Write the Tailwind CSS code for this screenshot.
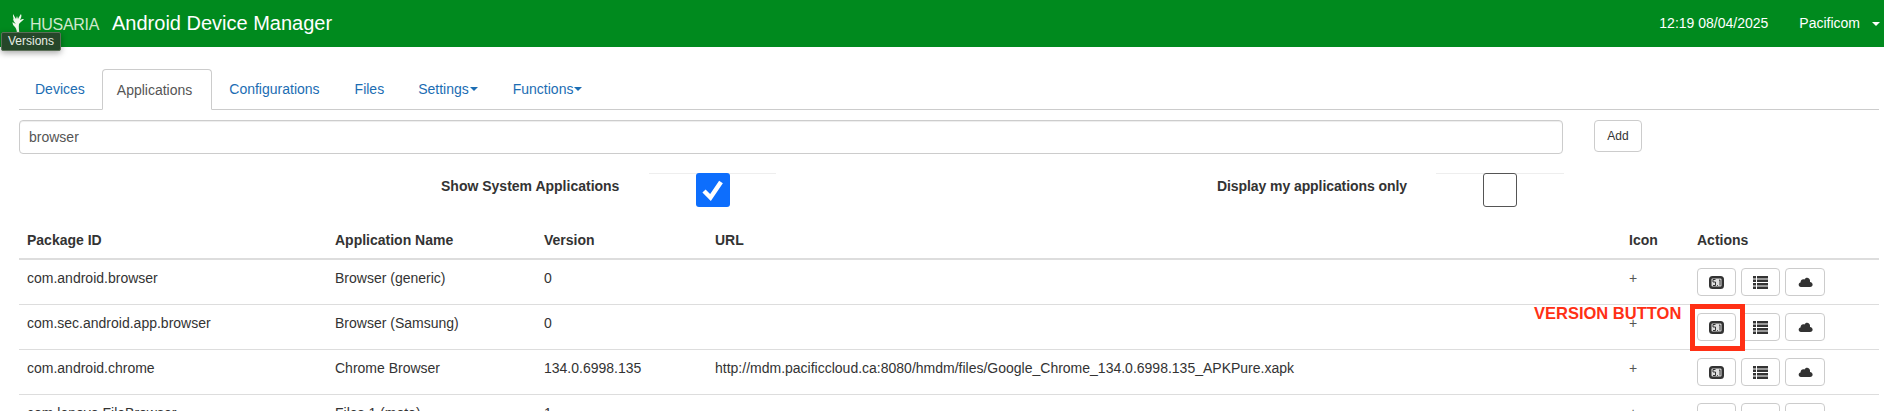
<!DOCTYPE html>
<html><head><meta charset="utf-8"><script src="https://cdn.jsdelivr.net/npm/@tailwindcss/browser@4"></script></head>
<body class="relative h-[411px] overflow-hidden bg-white font-['Liberation_Sans',Arial,sans-serif] text-[14px] leading-[20px] text-[#333]">
<header class="flex h-[47px] items-center bg-[#008a1e] text-white">
  <div class="ml-[12px] flex items-center">
    <svg width="12" height="20" viewBox="0 0 12 20" class="mt-[1px]"><path d="M1 0 C2 2 3 3 4 5 L5 2 L6 5 C7 3 8 1 9 0 C10 2 9 4 8 6 C9 5.500 10.500 5 12 5 C11 7 8 8 7 10 C6.500 13 7 16 7.500 20 L5 20 C5 17 4.500 15 3 13 C1.500 12 0.500 10 0.500 8 C2 9 3 9.500 4 10 C2 8 0.500 6 1.500 4 C1 3 1 2 1 0 Z" fill="#f0f8ec"/></svg>
    <span class="ml-[6px] mt-[3px] text-[16px] tracking-[-0.3px] text-[#cfe8cc]">HUSARIA</span>
  </div>
  <h1 class="ml-[13px] mt-[-2px] text-[20px] text-white">Android Device Manager</h1>
  <div class="ml-auto mt-[-1px] flex items-center">
    <span class="text-[14px]">12:19 08/04/2025</span>
    <span class="ml-[31px] text-[14px]">Pacificom</span>
    <span class="ml-[12px] mr-[4px] mt-[2px] h-0 w-0 border-x-[4px] border-t-[4px] border-x-transparent border-t-white"></span>
  </div>
</header>
<div class="absolute left-[1px] top-[32px] rounded-[2px] border border-[#5b6f58] bg-[#26472a] px-[6px] py-0 text-[12px] leading-[17px] text-[#e8eee6] shadow-[0_2px_6px_rgba(0,0,0,0.35)]">Versions</div>
<main class="pl-[19px] pr-[5px]">
  <nav class="mt-[22px] flex h-[41px] border-b border-[#ccc] text-[14px] text-[#1b6db3]">
    <a class="pl-[16px] pr-[17px] pt-[10px]">Devices</a>
    <a class="h-[41px] rounded-t-[4px] border border-b-white border-[#ccc] bg-white pl-[14px] pr-[19px] pt-[10px] text-[#555]">Applications</a>
    <a class="pl-[17px] pr-[18px] pt-[10px]">Configurations</a>
    <a class="pl-[17px] pr-[17px] pt-[10px]">Files</a>
    <a class="flex pl-[17px] pr-[19px] pt-[10px]">Settings<span class="ml-[1px] mt-[8px] h-0 w-0 border-x-[4px] border-t-[4px] border-x-transparent border-t-[#1b6db3]"></span></a>
    <a class="flex px-[16px] pt-[10px]">Functions<span class="ml-[1px] mt-[8px] h-0 w-0 border-x-[4px] border-t-[4px] border-x-transparent border-t-[#1b6db3]"></span></a>
  </nav>
  <div class="mt-[10px] flex">
    <div class="flex h-[34px] w-[1544px] items-center rounded-[4px] border border-[#ccc] px-[9px] text-[#555] shadow-[inset_0_1px_1px_rgba(0,0,0,0.075)]">browser</div>
    <button class="ml-[31px] h-[32px] w-[48px] rounded-[4px] border border-[#ccc] bg-white text-[12px] text-[#333]">Add</button>
  </div>
  <div class="relative mt-[19px] h-[34px]">
    <span class="absolute left-[422px] top-[3px] font-bold">Show System Applications</span>
    <div class="absolute left-[630px] top-0 flex h-[34px] w-[127px] justify-center border-t border-[#eee]">
      <span class="mt-[-1px] flex h-[34px] w-[34px] items-center justify-center rounded-[3px] bg-[#0d6efd]">
        <svg width="26" height="26" viewBox="0 0 26 26"><path d="M4 14 L10.500 20.500 L21 5" fill="none" stroke="#fff" stroke-width="4.500"/></svg>
      </span>
    </div>
    <span class="absolute left-[1198px] top-[3px] font-bold tracking-[-0.08px]">Display my applications only</span>
    <div class="absolute left-[1417px] top-0 flex h-[34px] w-[128px] justify-center border-t border-[#eee]">
      <span class="mt-[-1px] h-[34px] w-[34px] rounded-[3px] border border-[#555] bg-white"></span>
    </div>
  </div>
  <table class="mt-[19px] w-[1860px] table-fixed border-collapse text-left">
    <colgroup><col class="w-[308px]"><col class="w-[209px]"><col class="w-[171px]"><col class="w-[914px]"><col class="w-[76px]"><col></colgroup>
    <thead><tr class="h-[33px] border-b-2 border-[#ddd] align-top font-bold">
      <th class="px-[8px] pt-[4px]">Package ID</th><th class="px-[8px] pt-[4px]">Application Name</th><th class="px-[8px] pt-[4px]">Version</th><th class="px-[8px] pt-[4px]">URL</th><th class="px-[8px] pt-[4px]">Icon</th><th class="px-0 pt-[4px]">Actions</th>
    </tr></thead>
    <tbody>
      <tr class="h-[45px] border-b border-[#ddd]"><td class="px-[8px] pb-[7px]">com.android.browser</td><td class="px-[8px] pb-[7px]">Browser (generic)</td><td class="px-[8px] pb-[7px]">0</td><td></td><td class="px-[8px] pb-[7px] text-[#555]">+</td><td>
        <div class="flex gap-[5px] pt-[1px]">
          <button class="flex h-[28px] w-[39px] items-center justify-center rounded-[4px] border border-[#ccc] bg-white"><svg width="15" height="13" viewBox="0 0 15 13"><rect x="0" y="0" width="15" height="13" rx="3.500" fill="#333"/><rect x="2.500" y="2.500" width="10" height="8" rx="1" fill="#ddd"/><path d="M6.500 3.500H4v2.500h2.500v3.500H4M8 9.500h.8M10 4.500l1-.7v5.700" stroke="#333" fill="none"/></svg></button>
          <button class="flex h-[28px] w-[39px] items-center justify-center rounded-[4px] border border-[#ccc] bg-white"><svg width="15" height="13" viewBox="0 0 15 13" fill="#333"><path d="M0 0h3v2.500H0zM4 0h11v2.500H4zM0 3.500h3V6H0zM4 3.500h11V6H4zM0 7h3v2.500H0zM4 7h11v2.500H4zM0 10.500h3V13H0zM4 10.500h11V13H4z"/></svg></button>
          <button class="flex h-[28px] w-[40px] items-center justify-center rounded-[4px] border border-[#ccc] bg-white"><svg width="15" height="10" viewBox="0 0 15 10" fill="#333"><path d="M3 10 C0 10 0 6 2.500 5.500 C2.500 2.500 5 1.500 6.500 2.500 C7.500 0 11.500 0 12 3.500 C12 4.500 12 4.700 12 5 C15.500 5.500 15.500 10 12 10 Z"/></svg></button>
        </div></td></tr>
      <tr class="h-[45px] border-b border-[#ddd]"><td class="px-[8px] pb-[7px]">com.sec.android.app.browser</td><td class="px-[8px] pb-[7px]">Browser (Samsung)</td><td class="px-[8px] pb-[7px]">0</td><td></td><td class="px-[8px] pb-[7px] text-[#555]">+</td><td>
        <div class="flex gap-[5px] pt-[1px]">
          <button class="flex h-[28px] w-[39px] items-center justify-center rounded-[4px] border border-[#ccc] bg-white"><svg width="15" height="13" viewBox="0 0 15 13"><rect x="0" y="0" width="15" height="13" rx="3.500" fill="#333"/><rect x="2.500" y="2.500" width="10" height="8" rx="1" fill="#ddd"/><path d="M6.500 3.500H4v2.500h2.500v3.500H4M8 9.500h.8M10 4.500l1-.7v5.700" stroke="#333" fill="none"/></svg></button>
          <button class="flex h-[28px] w-[39px] items-center justify-center rounded-[4px] border border-[#ccc] bg-white"><svg width="15" height="13" viewBox="0 0 15 13" fill="#333"><path d="M0 0h3v2.500H0zM4 0h11v2.500H4zM0 3.500h3V6H0zM4 3.500h11V6H4zM0 7h3v2.500H0zM4 7h11v2.500H4zM0 10.500h3V13H0zM4 10.500h11V13H4z"/></svg></button>
          <button class="flex h-[28px] w-[40px] items-center justify-center rounded-[4px] border border-[#ccc] bg-white"><svg width="15" height="10" viewBox="0 0 15 10" fill="#333"><path d="M3 10 C0 10 0 6 2.500 5.500 C2.500 2.500 5 1.500 6.500 2.500 C7.500 0 11.500 0 12 3.500 C12 4.500 12 4.700 12 5 C15.500 5.500 15.500 10 12 10 Z"/></svg></button>
        </div></td></tr>
      <tr class="h-[45px] border-b border-[#ddd]"><td class="px-[8px] pb-[7px]">com.android.chrome</td><td class="px-[8px] pb-[7px]">Chrome Browser</td><td class="px-[8px] pb-[7px]">134.0.6998.135</td><td class="px-[8px] pb-[7px]">http://mdm.pacificcloud.ca:8080/hmdm/files/Google_Chrome_134.0.6998.135_APKPure.xapk</td><td class="px-[8px] pb-[7px] text-[#555]">+</td><td>
        <div class="flex gap-[5px] pt-[1px]">
          <button class="flex h-[28px] w-[39px] items-center justify-center rounded-[4px] border border-[#ccc] bg-white"><svg width="15" height="13" viewBox="0 0 15 13"><rect x="0" y="0" width="15" height="13" rx="3.500" fill="#333"/><rect x="2.500" y="2.500" width="10" height="8" rx="1" fill="#ddd"/><path d="M6.500 3.500H4v2.500h2.500v3.500H4M8 9.500h.8M10 4.500l1-.7v5.700" stroke="#333" fill="none"/></svg></button>
          <button class="flex h-[28px] w-[39px] items-center justify-center rounded-[4px] border border-[#ccc] bg-white"><svg width="15" height="13" viewBox="0 0 15 13" fill="#333"><path d="M0 0h3v2.500H0zM4 0h11v2.500H4zM0 3.500h3V6H0zM4 3.500h11V6H4zM0 7h3v2.500H0zM4 7h11v2.500H4zM0 10.500h3V13H0zM4 10.500h11V13H4z"/></svg></button>
          <button class="flex h-[28px] w-[40px] items-center justify-center rounded-[4px] border border-[#ccc] bg-white"><svg width="15" height="10" viewBox="0 0 15 10" fill="#333"><path d="M3 10 C0 10 0 6 2.500 5.500 C2.500 2.500 5 1.500 6.500 2.500 C7.500 0 11.500 0 12 3.500 C12 4.500 12 4.700 12 5 C15.500 5.500 15.500 10 12 10 Z"/></svg></button>
        </div></td></tr>
      <tr class="h-[45px] border-b border-[#ddd]"><td class="px-[8px] pb-[7px]">com.lenovo.FileBrowser</td><td class="px-[8px] pb-[7px]">Files 1 (moto)</td><td class="px-[8px] pb-[7px]">1</td><td></td><td class="px-[8px] pb-[7px] text-[#555]">+</td><td>
        <div class="flex gap-[5px] pt-[1px]">
          <button class="flex h-[28px] w-[39px] items-center justify-center rounded-[4px] border border-[#ccc] bg-white"></button>
          <button class="flex h-[28px] w-[39px] items-center justify-center rounded-[4px] border border-[#ccc] bg-white"></button>
          <button class="flex h-[28px] w-[40px] items-center justify-center rounded-[4px] border border-[#ccc] bg-white"></button>
        </div></td></tr>
    </tbody>
  </table>
</main>
<div class="absolute left-[1534px] top-[303px] text-[16.500px] font-bold leading-[20px] text-[#ff3015]">VERSION BUTTON</div>
<div class="absolute left-[1690px] top-[304px] h-[47px] w-[55px] border-[5px] border-[#ff3015]"></div>
</body></html>
